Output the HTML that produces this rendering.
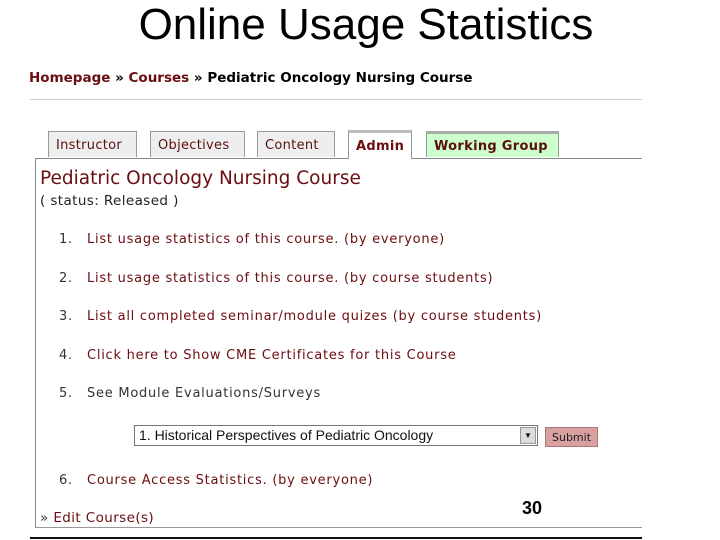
<!DOCTYPE html>
<html><head><style>
body{margin:0;width:720px;height:540px;background:#fff;position:relative;overflow:hidden;font-family:"DejaVu Sans","Liberation Sans",sans-serif;}
.a{position:absolute;white-space:nowrap;}
.r{color:#6b0d12;}
.tab{position:absolute;top:131px;height:26px;border:1px solid #999;border-bottom:none;background:#eee;font-size:13px;line-height:28px;padding-left:7px;box-sizing:border-box;color:#5a1010;letter-spacing:0.3px;}
.li{font-size:13px;color:#333;letter-spacing:0.75px;}
.li.r{color:#6b0d12;}
</style></head><body>
<div class="a" style="left:0;width:732px;text-align:center;top:0px;font-family:'Liberation Sans',Arial,sans-serif;font-size:44px;color:#000;">Online Usage Statistics</div>
<div class="a" style="left:29px;top:70px;font-size:13.5px;font-weight:bold;"><span class="r">Homepage</span> » <span class="r">Courses</span> » <span>Pediatric Oncology Nursing Course</span></div>
<div class="a" style="left:30px;top:99px;width:612px;height:1px;background:#ccc;"></div>
<div class="tab" style="left:48px;width:89px;">Instructor</div>
<div class="tab" style="left:150px;width:95px;">Objectives</div>
<div class="tab" style="left:257px;width:78px;">Content</div>
<div class="tab" style="left:348px;width:64px;top:130px;height:29px;background:#fff;border-top:3px solid #bbb;font-weight:bold;line-height:28px;color:#6b0d12;">Admin</div>
<div class="tab" style="left:426px;width:133px;background:#ccffcc;border-top:3px solid #aaa;font-weight:bold;line-height:26px;">Working Group</div>
<div class="a" style="left:35px;top:158px;width:313px;height:1px;background:#888;"></div>
<div class="a" style="left:412px;top:158px;width:230px;height:1px;background:#888;"></div>
<div class="a" style="left:35px;top:158px;width:1px;height:370px;background:#888;"></div>
<div class="a" style="left:35px;top:527px;width:607px;height:1px;background:#999;"></div>
<div class="a" style="left:30px;top:537px;width:612px;height:2px;background:#111;"></div>
<div class="a r" style="left:40px;top:168px;font-size:18.5px;">Pediatric Oncology Nursing Course</div>
<div class="a" style="left:40px;top:193px;font-size:13.5px;color:#222;letter-spacing:0.4px;">( status: Released )</div>
<div class="a li" style="left:59px;top:232px;">1.</div><div class="a li r" style="left:87px;top:232px;">List usage statistics of this course. (by everyone)</div>
<div class="a li" style="left:59px;top:271px;">2.</div><div class="a li r" style="left:87px;top:271px;">List usage statistics of this course. (by course students)</div>
<div class="a li" style="left:59px;top:309px;">3.</div><div class="a li r" style="left:87px;top:309px;">List all completed seminar/module quizes (by course students)</div>
<div class="a li" style="left:59px;top:348px;">4.</div><div class="a li r" style="left:87px;top:348px;">Click here to Show CME Certificates for this Course</div>
<div class="a li" style="left:59px;top:386px;">5.</div><div class="a li" style="left:87px;top:386px;">See Module Evaluations/Surveys</div>
<div class="a" style="left:134px;top:425px;width:404px;height:21px;border:1px solid #777;box-sizing:border-box;font-family:'Liberation Sans',sans-serif;font-size:14px;line-height:19px;padding-left:4px;color:#111;">1. Historical Perspectives of Pediatric Oncology
<div style="position:absolute;right:1px;top:1px;width:16px;height:17px;background:#ddd;border:1px solid #999;box-sizing:border-box;font-size:8px;line-height:15px;text-align:center;">▼</div></div>
<div class="a" style="left:545px;top:427px;width:53px;height:20px;background:#d9a0a0;border:1px solid #a77;box-sizing:border-box;font-size:11px;line-height:19px;text-align:center;color:#222;">Submit</div>
<div class="a li" style="left:59px;top:473px;">6.</div><div class="a li r" style="left:87px;top:473px;">Course Access Statistics. (by everyone)</div>
<div class="a" style="left:40px;top:510px;font-size:13.5px;color:#333;letter-spacing:0.4px;">» <span class="r">Edit Course(s)</span></div>
<div class="a" style="left:522px;top:498px;font-family:'Liberation Sans',sans-serif;font-weight:bold;font-size:18px;">30</div>
</body></html>
